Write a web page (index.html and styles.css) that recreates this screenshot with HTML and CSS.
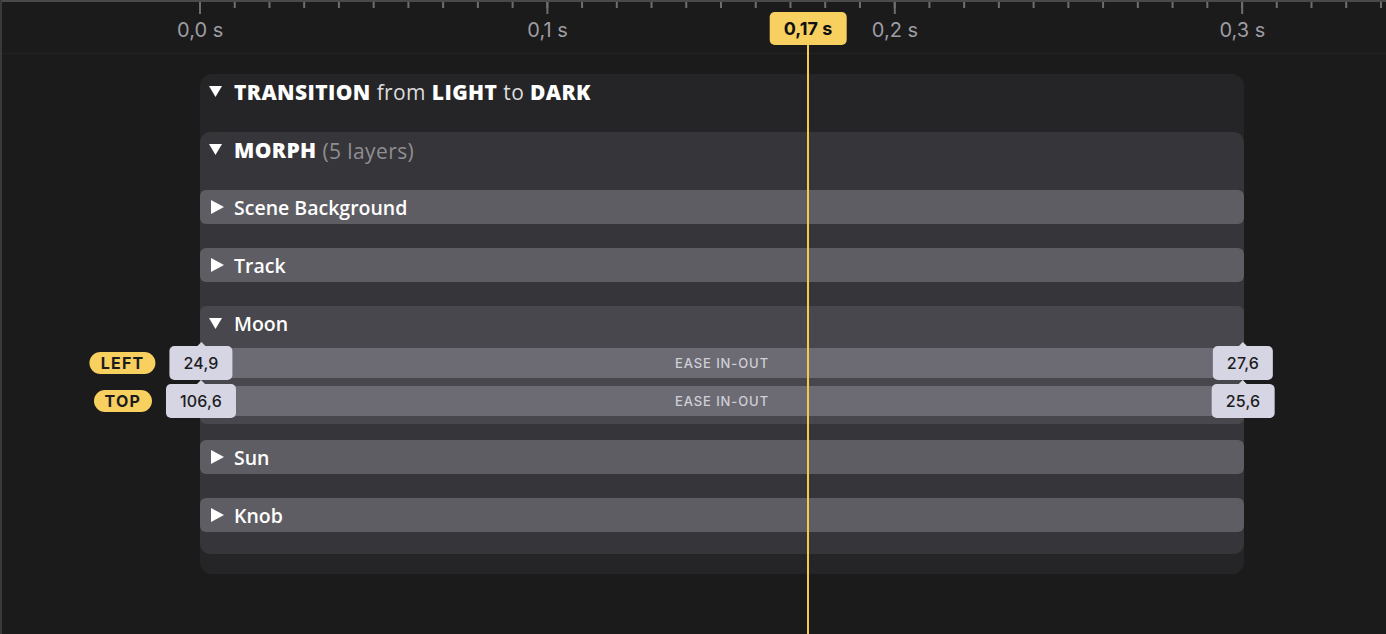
FILE: index.html
```html
<!DOCTYPE html>
<html lang="en">
<head>
    <meta charset="UTF-8">
    <title>Transition timeline</title>
    <link rel="stylesheet" href="styles.css">
</head>
<body>
<div class="app">

    <div class="ruler">
        <div class="ticks"></div>
        <div class="labels">
            <span>0,0 s</span>
            <span>0,1 s</span>
            <span>0,2 s</span>
            <span>0,3 s</span>
        </div>
    </div>

    <div class="panel">
        <div class="head">
            <svg class="tri" viewBox="0 0 13 11"><path d="M0 0H13L6.5 11Z"/></svg>
            <span><b>TRANSITION</b> from <b>LIGHT</b> to <b>DARK</b></span>
        </div>

        <div class="morph">
            <div class="head">
                <svg class="tri" viewBox="0 0 13 11"><path d="M0 0H13L6.5 11Z"/></svg>
                <span><b>MORPH</b> <span class="muted">(5 layers)</span></span>
            </div>

            <div class="layer">
                <div class="layer-head">
                    <svg class="tri-r" viewBox="0 0 13 14"><path d="M0 0L13 7L0 14Z"/></svg>
                    Scene Background
                </div>
            </div>

            <div class="layer">
                <div class="layer-head">
                    <svg class="tri-r" viewBox="0 0 13 14"><path d="M0 0L13 7L0 14Z"/></svg>
                    Track
                </div>
            </div>

            <div class="layer open">
                <div class="layer-head">
                    <svg class="tri" viewBox="0 0 13 11"><path d="M0 0H13L6.5 11Z"/></svg>
                    Moon
                </div>
                <div class="track">
                    <span class="val start"><span class="prop">LEFT</span>24,9</span>
                    EASE IN-OUT
                    <span class="val end">27,6</span>
                </div>
                <div class="track">
                    <span class="val start"><span class="prop">TOP</span>106,6</span>
                    EASE IN-OUT
                    <span class="val end">25,6</span>
                </div>
            </div>

            <div class="layer">
                <div class="layer-head">
                    <svg class="tri-r" viewBox="0 0 13 14"><path d="M0 0L13 7L0 14Z"/></svg>
                    Sun
                </div>
            </div>

            <div class="layer">
                <div class="layer-head">
                    <svg class="tri-r" viewBox="0 0 13 14"><path d="M0 0L13 7L0 14Z"/></svg>
                    Knob
                </div>
            </div>
        </div>
    </div>

    <div class="playhead">
        <span class="time">0,17 s</span>
    </div>

</div>
</body>
</html>
```

FILE: styles.css
```css
html, body {
    margin: 0;
    height: 100%;
    background: #1b1b1b;
    overflow: hidden;
}
.app {
    position: relative;
    height: 100%;
    border-left: 2px solid #3a3a3a;
    font-family: "Open Sans", Lato, sans-serif;
    color: #fff;
}

/* ruler */
.ruler {
    height: 51px;
    border-top: 2px solid #4a4a4a;
    border-bottom: 1px solid #232323;
    position: relative;
}
.ticks {
    margin-left: 197px;
    height: 13px;
    background:
        linear-gradient(to right, #6e6e6e 2px, transparent 2px) 0 0 / 347.4px 12px repeat-x,
        linear-gradient(to right, #6e6e6e 2px, transparent 2px) 0 0 / 34.74px 6px repeat-x;
}
.labels {
    display: flex;
    margin-left: 24.5px;
    margin-top: 2px;
    font-family: Inter, "Liberation Sans", sans-serif;
    font-size: 20px;
    line-height: 26px;
    color: #9d9da3;
}
.labels span {
    flex: 0 0 347.4px;
    text-align: center;
}

/* panels */
.panel {
    margin: 20px 0 0 198px;
    width: 1044px;
    background: #252527;
    border-radius: 12px;
    padding-bottom: 20px;
}
.head {
    height: 34px;
    display: flex;
    align-items: center;
    gap: 12px;
    padding-left: 9px;
    margin-bottom: 24px;
    font-size: 21px;
    letter-spacing: 0.4px;
    color: #ddd;
}
.head span {
    position: relative;
    top: 1px;
}
.head b {
    color: #fff;
    font-weight: 800;
}
.muted {
    color: #8e8e93;
    font-weight: 400;
}
.tri {
    width: 13px;
    height: 11px;
    fill: #fff;
    flex: none;
}
.tri-r {
    width: 13px;
    height: 14px;
    fill: #fff;
    flex: none;
}
.morph {
    background: #363539;
    border-radius: 10px;
    padding-bottom: 22px;
}
.layer {
    background: #5e5d63;
    border-radius: 6px;
    margin-bottom: 24px;
}
.layer:last-child {
    margin-bottom: 0;
}
.layer-head {
    height: 34px;
    display: flex;
    align-items: center;
    gap: 10px;
    padding-left: 11px;
    font-size: 19.5px;
    font-weight: 600;
}
.layer.open {
    background: #48474d;
    padding-bottom: 8px;
    margin-bottom: 16px;
}
.layer.open .layer-head {
    padding-left: 9px;
    gap: 12px;
}

/* moon tracks */
.track {
    position: relative;
    height: 30px;
    margin-top: 8px;
    background: #6c6b73;
    font-family: Inter, "Liberation Sans", sans-serif;
    font-size: 13px;
    font-weight: 500;
    letter-spacing: 0.9px;
    color: #cfcfd8;
    display: flex;
    align-items: center;
    justify-content: center;
}
.val {
    position: absolute;
    top: -2px;
    height: 34px;
    padding: 0 14px;
    display: flex;
    align-items: center;
    transform: translateX(-50%);
    background: #d6d5e3;
    border-radius: 5px;
    color: #1c1c1e;
    font-size: 16px;
    font-weight: 500;
    letter-spacing: 0.2px;
}
.val::before {
    content: "";
    position: absolute;
    left: 50%;
    top: -4px;
    margin-left: -4px;
    border-left: 4px solid transparent;
    border-right: 4px solid transparent;
    border-bottom: 4px solid #d6d5e3;
}
.val.start {
    left: 1px;
}
.val.end {
    left: 1043px;
}
.prop {
    position: absolute;
    right: calc(100% + 14px);
    top: 6px;
    height: 22px;
    padding: 0 11px;
    display: flex;
    align-items: center;
    background: #f7d060;
    border-radius: 11px;
    font-weight: 700;
    font-size: 16px;
    letter-spacing: 1.2px;
    color: #1c1c1e;
}

/* playhead */
.playhead {
    position: absolute;
    left: 805px;
    top: 45px;
    bottom: 0;
    width: 2px;
    background: #f5c94a;
}
.time {
    position: absolute;
    bottom: 100%;
    left: 1px;
    transform: translateX(-50%);
    height: 33px;
    padding: 0 14px;
    display: flex;
    align-items: center;
    white-space: nowrap;
    background: #f7d060;
    border-radius: 5px;
    font-family: Inter, "Liberation Sans", sans-serif;
    font-size: 18px;
    font-weight: 700;
    color: #111;
}
```
